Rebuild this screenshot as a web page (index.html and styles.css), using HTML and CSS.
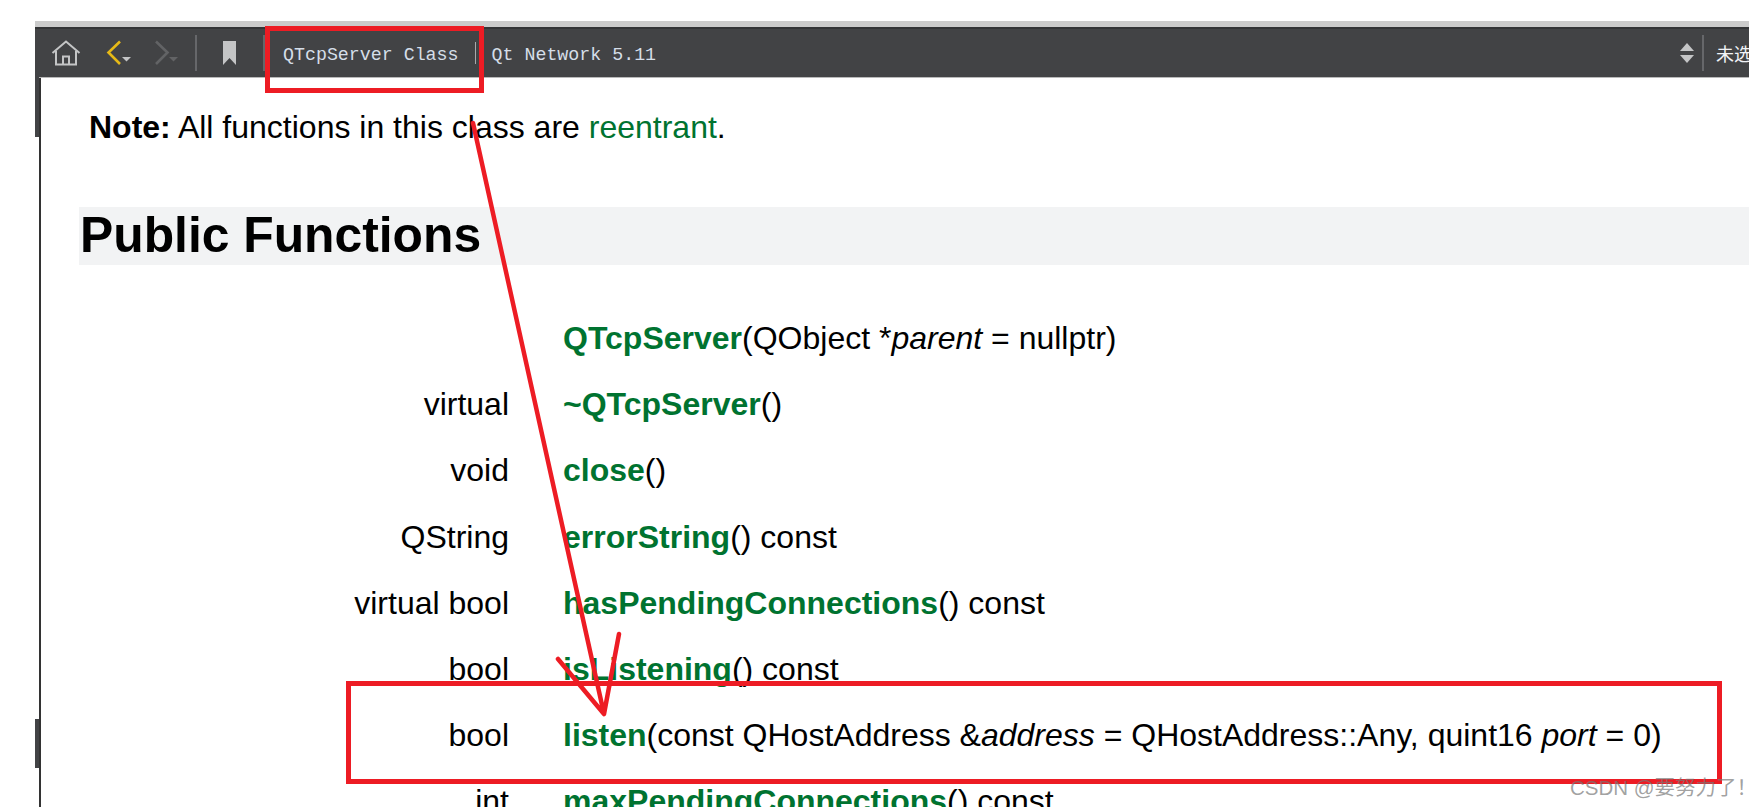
FILE: index.html
```html
<!DOCTYPE html>
<html lang="en">
<head>
  <meta charset="UTF-8" />
  <title>QTcpServer Class</title>
  <link rel="stylesheet" href="styles.css">
</head>
<body>
  <div class="shot">
    <div class="top-strip"></div>
    <div class="toolbar">
      <svg class="icon icon-home" width="30" height="26" viewBox="0 0 30 26">
        <path d="M1.500 13 L15 1.500 L28.500 13 M5 11 V24.500 H25 V11 M12 24.500 V16.500 H18 V24.500" fill="none" stroke="#c4c5c6" stroke-width="2"/>
      </svg>
      <svg class="icon icon-back" width="26" height="26" viewBox="0 0 26 26">
        <path d="M14 1.500 L2.500 12.500 L14 24" fill="none" stroke="#e6b917" stroke-width="2.600"/>
        <path d="M16 17 H25 L20.500 21.500 Z" fill="#c4c5c6"/>
      </svg>
      <svg class="icon icon-forward" width="26" height="26" viewBox="0 0 26 26">
        <path d="M2 1.500 L13.500 12.500 L2 24" fill="none" stroke="#626365" stroke-width="2.600"/>
        <path d="M15 17 H24 L19.500 21.500 Z" fill="#626365"/>
      </svg>
      <span class="sep"></span>
      <svg class="icon icon-mark" width="13" height="25" viewBox="0 0 13 25">
        <path d="M0 0 H13 V24 L6.500 17 L0 24 Z" fill="#c4c5c6"/>
      </svg>
      <span class="sep sep-mark"></span>
      <span class="crumb">QTcpServer Class</span>
      <span class="crumb-sep"></span>
      <span class="crumb">Qt Network 5.11</span>
      <svg class="icon icon-sort" width="14" height="21" viewBox="0 0 14 21">
        <path d="M7 0 L14 8 H0 Z M0 12 H14 L7 20 Z" fill="#c4c5c6"/>
      </svg>
      <span class="sep sep-right"></span>
      <span class="status">未选择</span>
    </div>

    <div class="content">
      <p class="note"><strong>Note:</strong> All functions in this class are <a href="#">reentrant</a>.</p>
      <h2>Public Functions</h2>
      <div class="func-list">
        <div class="func-type"></div>
        <div class="func-sig"><a href="#">QTcpServer</a>(QObject *<i>parent</i> = nullptr)</div>
        <div class="func-type">virtual</div>
        <div class="func-sig"><a href="#">~QTcpServer</a>()</div>
        <div class="func-type">void</div>
        <div class="func-sig"><a href="#">close</a>()</div>
        <div class="func-type">QString</div>
        <div class="func-sig"><a href="#">errorString</a>() const</div>
        <div class="func-type">virtual bool</div>
        <div class="func-sig"><a href="#">hasPendingConnections</a>() const</div>
        <div class="func-type">bool</div>
        <div class="func-sig"><a href="#">isListening</a>() const</div>
        <div class="func-type">bool</div>
        <div class="func-sig"><a href="#">listen</a>(const QHostAddress &amp;<i>address</i> = QHostAddress::Any, quint16 <i>port</i> = 0)</div>
        <div class="func-type">int</div>
        <div class="func-sig"><a href="#">maxPendingConnections</a>() const</div>
      </div>
    </div>
  </div>

  <div class="gutter gutter-top"></div>
  <div class="gutter gutter-low"></div>

  <svg class="marks" width="1759" height="807" viewBox="0 0 1759 807">
    <rect x="267.500" y="28.500" width="214" height="62" fill="none" stroke="#ed1c24" stroke-width="5"/>
    <rect x="348.500" y="683.500" width="1371" height="98" fill="none" stroke="#ed1c24" stroke-width="5"/>
    <path d="M473 123 L604 714 M558 659 L604 714 L619 634" fill="none" stroke="#ed1c24" stroke-width="4.500" stroke-linecap="round" stroke-linejoin="round"/>
  </svg>
  <div class="watermark">CSDN @要努力了！</div>
</body>
</html>
```

FILE: styles.css
```css
html, body {
  margin: 0;
  height: 807px;
  overflow: hidden;
  background: #fff;
}
body {
  position: relative;
  font-family: "Liberation Sans", Arial, sans-serif;
  color: #000;
}

.shot {
  margin: 21px 0 0 35px;
  width: 1714px;
  height: 786px;
  overflow: hidden;
}

.top-strip {
  height: 6px;
  background: #cbcbcb;
}

.toolbar {
  display: flex;
  align-items: center;
  height: 48px;
  border-top: 2px solid #333436;
  border-bottom: 1px solid #b9b9b9;
  background: #424345;
  padding-left: 16px;
  overflow: hidden;
}
.icon {
  flex: none;
}
.icon-home { margin-right: 25px; }
.icon-back { margin-right: 22px; }
.icon-forward { margin-right: 15px; }
.icon-mark { margin: 0 0 0 26px; }

.sep {
  flex: none;
  width: 2px;
  height: 36px;
  background: #66676a;
}
.sep-mark { margin: 0 18px 0 27px; }
.sep-right { margin: 0 12px 0 8px; }

.crumb {
  flex: none;
  padding-top: 4px;
  font-family: "Liberation Mono", monospace;
  font-size: 18.3px;
  color: #d5dee8;
  white-space: pre;
}
.crumb-sep {
  flex: none;
  width: 1px;
  height: 22px;
  margin: 0 16px;
  background: #a9aaac;
}
.icon-sort { margin-left: auto; }
.status {
  flex: none;
  width: 33px;
  overflow: hidden;
  white-space: nowrap;
  font-family: "Noto Sans CJK SC", sans-serif;
  font-size: 18px;
  color: #f1f3f6;
}

.content {
  margin-left: 4px;
  border-left: 2px solid #333;
  height: 729px;
  padding-left: 38px;
  overflow: hidden;
}
.note {
  margin: 0;
  padding: 30px 0 0 10px;
  font-size: 32px;
  line-height: 38px;
}
.note a, .func-sig a {
  color: #007330;
  text-decoration: none;
}
.func-sig a {
  font-weight: bold;
}

h2 {
  margin: 61px 0 0;
  padding: 0 0 0 1px;
  height: 58px;
  background: #f2f3f4;
  font-size: 49.8px;
  line-height: 56px;
  font-weight: bold;
}

.func-list {
  display: grid;
  grid-template-columns: 430px 1fr;
  grid-auto-rows: 66.2px;
  column-gap: 54px;
  margin-top: 40px;
  font-size: 32px;
  line-height: 66px;
}
.func-type {
  text-align: right;
}
.func-sig {
  white-space: nowrap;
}

.gutter {
  position: absolute;
  left: 35px;
  width: 4px;
  background: #424345;
}
.gutter-top { top: 77px; height: 60px; }
.gutter-low { top: 719px; height: 49px; }

.marks {
  position: absolute;
  left: 0;
  top: 0;
}
.watermark {
  position: absolute;
  right: 2px;
  top: 775px;
  font-size: 20.5px;
  line-height: 26px;
  font-family: "Liberation Sans", "Noto Sans CJK SC", sans-serif;
  color: rgba(120, 120, 120, 0.7);
  white-space: nowrap;
}
```
